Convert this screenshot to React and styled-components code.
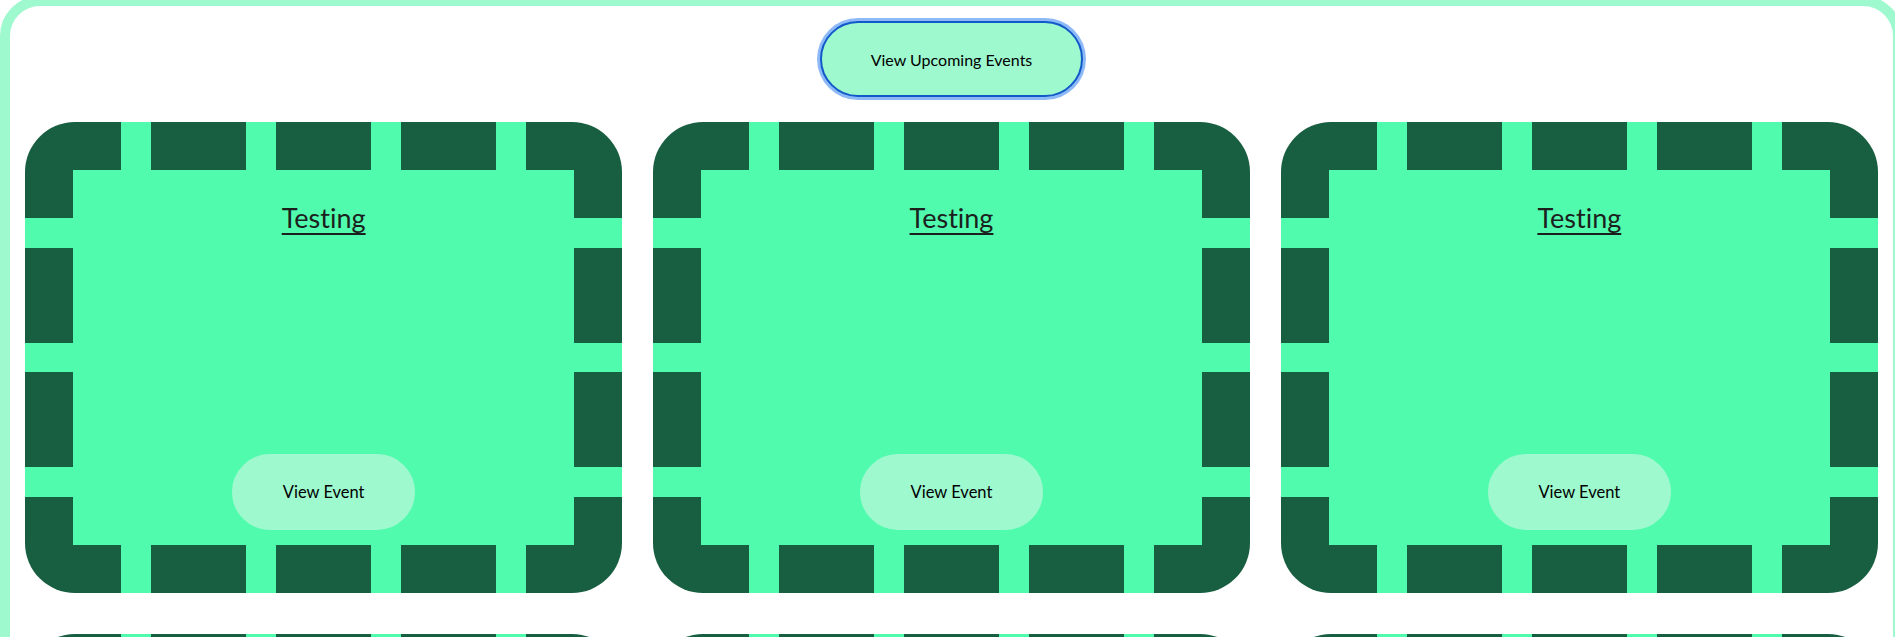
import React from 'react'
import styled, { createGlobalStyle, css } from 'styled-components'

const colors = {
    dark: '#185e41',
    mint: '#50fbad',
    pale: '#9ef9cf',
    text: '#111',
}

const GlobalStyle = createGlobalStyle`
    html, body {
        margin: 0;
        padding: 0;
        overflow: hidden;
        background: #fff;
    }
    body {
        font-family: Lato, 'Liberation Sans', sans-serif;
        color: ${colors.text};
    }
    * {
        box-sizing: border-box;
    }
`

const Frame = styled.div`
    width: 1903px;
    margin-top: -4px;
    border: 10px solid ${colors.pale};
    border-radius: 40px;
    padding: 15px;
    background: #fff;
`

const Header = styled.div`
    display: flex;
    justify-content: center;
    margin-bottom: 25px;
`

const Button = styled.button`
    font-family: Lato, 'Liberation Sans', sans-serif;
    font-size: ${props => props.size || 16}px;
    line-height: 19px;
    color: #000;
    background: ${colors.pale};
    border: 2px solid ${colors.pale};
    border-radius: 999px;
    padding: 26.5px 48.5px;
    cursor: pointer;

    ${props =>
        props.focused &&
        css`
            border-color: #1259c9;
            box-shadow: 0 0 0 3px #8dbaf7;
        `};
`

const Grid = styled.div`
    display: grid;
    grid-template-columns: repeat(3, 1fr);
    column-gap: 30.5px;
    row-gap: 40.5px;
`

/* thick dashed frame: dark card, mint gaps painted over the 48px rim */
const rim = 48
const corner = rim * 2
const gapX = `repeating-linear-gradient(90deg, ${colors.mint} 0 30px, transparent 30px 125px)`
const gapY = `repeating-linear-gradient(180deg, ${colors.mint} 0 29.7px, transparent 29.7px 124.7px)`

const Card = styled.div`
    height: 471px;
    border-radius: 50px;
    padding: ${rim + 15}px;
    display: flex;
    flex-direction: column;
    align-items: center;
    justify-content: space-between;
    background-color: ${colors.dark};
    background-repeat: no-repeat;
    background-image: linear-gradient(${colors.mint}, ${colors.mint}), ${gapX}, ${gapX}, ${gapY}, ${gapY};
    background-position: ${rim}px ${rim}px, ${corner}px 0, ${corner}px 100%, 0 ${corner}px, 100% ${corner}px;
    background-size: calc(100% - ${corner}px) calc(100% - ${corner}px),
        calc(100% - ${corner * 2}px) ${rim}px, calc(100% - ${corner * 2}px) ${rim}px,
        ${rim}px calc(100% - ${corner * 2}px), ${rim}px calc(100% - ${corner * 2}px);
`

const Title = styled.h2`
    font-size: 27px;
    font-weight: 400;
    line-height: 1.2;
    margin: 17px 0 0;
    color: #1b1f1d;
    font-variant-ligatures: none;
    text-decoration: underline;
    text-decoration-thickness: 2px;
    text-underline-offset: 5px;
`

const events = Array.from({ length: 6 }, (_, i) => ({ id: i, name: 'Testing' }))

export default function App() {
    return (
        <>
            <GlobalStyle />
            <Frame>
                <Header>
                    <Button focused>View Upcoming Events</Button>
                </Header>
                <Grid>
                    {events.map(ev => (
                        <Card key={ev.id}>
                            <Title>{ev.name}</Title>
                            <Button size={16.5}>View Event</Button>
                        </Card>
                    ))}
                </Grid>
            </Frame>
        </>
    )
}
